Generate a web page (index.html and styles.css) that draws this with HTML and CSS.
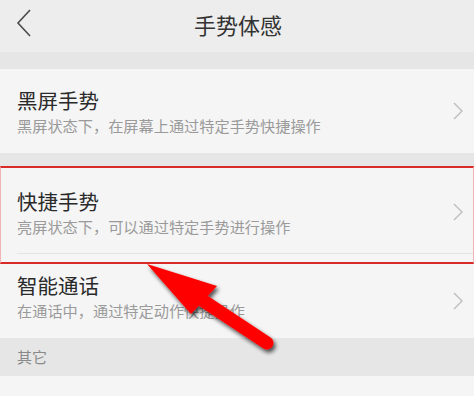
FILE: index.html
```html
<!DOCTYPE html>
<html lang="zh-CN">
<head>
<meta charset="utf-8">
<title>手势体感</title>
<link rel="stylesheet" href="styles.css">
</head>
<body>
<div class="page">
  <header class="topbar">
    <svg class="back" width="16" height="30" viewBox="0 0 16 30"><polyline points="14,1 2,14 14,27" fill="none" stroke="#4a4a4a" stroke-width="1.6"/></svg>
    <h1 class="title">手势体感</h1>
  </header>
  <div class="gap gap-top"></div>
  <div class="item item-first">
    <div class="texts">
      <div class="item-title">黑屏手势</div>
      <div class="item-sub">黑屏状态下，在屏幕上通过特定手势快捷操作</div>
    </div>
    <svg class="chev" width="10" height="18" viewBox="0 0 10 18"><polyline points="1,1 9,9 1,17" fill="none" stroke="#bdbdbd" stroke-width="1.4"/></svg>
  </div>
  <div class="gap gap-mid"></div>
  <div class="highlight">
    <div class="item item-second">
      <div class="texts">
        <div class="item-title">快捷手势</div>
        <div class="item-sub">亮屏状态下，可以通过特定手势进行操作</div>
      </div>
      <svg class="chev" width="10" height="18" viewBox="0 0 10 18"><polyline points="1,1 9,9 1,17" fill="none" stroke="#bdbdbd" stroke-width="1.4"/></svg>
    </div>
    <div class="divider"></div>
  </div>
  <div class="item item-third">
    <div class="texts">
      <div class="item-title">智能通话</div>
      <div class="item-sub">在通话中，通过特定动作快捷操作</div>
    </div>
    <svg class="chev" width="10" height="18" viewBox="0 0 10 18"><polyline points="1,1 9,9 1,17" fill="none" stroke="#bdbdbd" stroke-width="1.4"/></svg>
  </div>
  <div class="section">其它</div>
  <div class="item item-fourth">
    <div class="texts">
      <div class="item-title">智能体感</div>
    </div>
  </div>
  <svg class="arrow" width="474" height="396" viewBox="0 0 474 396">
    <defs>
      <filter id="sh" x="-20%" y="-20%" width="140%" height="140%">
        <feGaussianBlur in="SourceAlpha" stdDeviation="2"/>
        <feOffset dx="2" dy="3" result="b"/>
        <feComponentTransfer><feFuncA type="linear" slope="0.7"/></feComponentTransfer>
        <feMerge><feMergeNode/><feMergeNode in="SourceGraphic"/></feMerge>
      </filter>
    </defs>
    <g filter="url(#sh)">
      <line x1="196" y1="296" x2="267" y2="343" stroke="#ff0000" stroke-width="13" stroke-linecap="round"/>
      <polygon points="147,264 217,286 191,314" fill="#ff0000"/>
    </g>
  </svg>
</div>
</body>
</html>
```
FILE: styles.css
```css
* { box-sizing: border-box; margin: 0; padding: 0; }
html, body { width: 474px; height: 396px; overflow: hidden; }
body {
  font-family: "Noto Sans CJK SC", "Noto Sans", sans-serif;
  background: #f5f5f5;
}
.page { position: relative; width: 474px; height: 396px; overflow: hidden; }
.topbar {
  height: 52px;
  background: #ededed;
  display: flex;
  align-items: center;
  justify-content: center;
  position: relative;
}
.back { position: absolute; left: 16px; top: 9px; }
.title {
  font-size: 22px;
  font-weight: 400;
  color: #333;
  line-height: 28px;
  margin-top: -4px;
  padding-left: 2px;
}
.gap { background: #e6e6e6; }
.gap-top { height: 17px; }
.gap-mid { height: 13px; }
.item {
  background: #f5f5f5;
  display: flex;
  align-items: center;
  justify-content: space-between;
  padding-left: 17px;
  padding-right: 11px;
}
.item-title { font-size: 20.5px; line-height: 26px; color: #2a2a2a; }
.item-sub { font-size: 15.2px; line-height: 20px; color: #9a9a9a; margin-top: 2px; }
.item-first { height: 84px; }
.highlight {
  border-top: 2px solid #d92a2a;
  border-bottom: 2px solid #d92a2a;
  border-left: 1px solid #f2b4b4;
  border-right: 1px solid #f2b4b4;
  background: #f5f5f5;
  height: 98px;
}
.item-second { height: 85px; padding-left: 16px; padding-right: 10px; padding-top: 2px; }
.divider { height: 1px; background: #e4e4e4; margin-left: 16px; }
.item-third { height: 74px; }
.item-third .texts { margin-top: -10px; }
.section {
  height: 38px;
  background: #e6e6e6;
  color: #8a8a8a;
  font-size: 15px;
  line-height: 38px;
  padding-left: 17px;
}
.item-fourth { height: 60px; align-items: flex-start; padding-top: 16px; }
.arrow { position: absolute; left: 0; top: 0; pointer-events: none; }
```
